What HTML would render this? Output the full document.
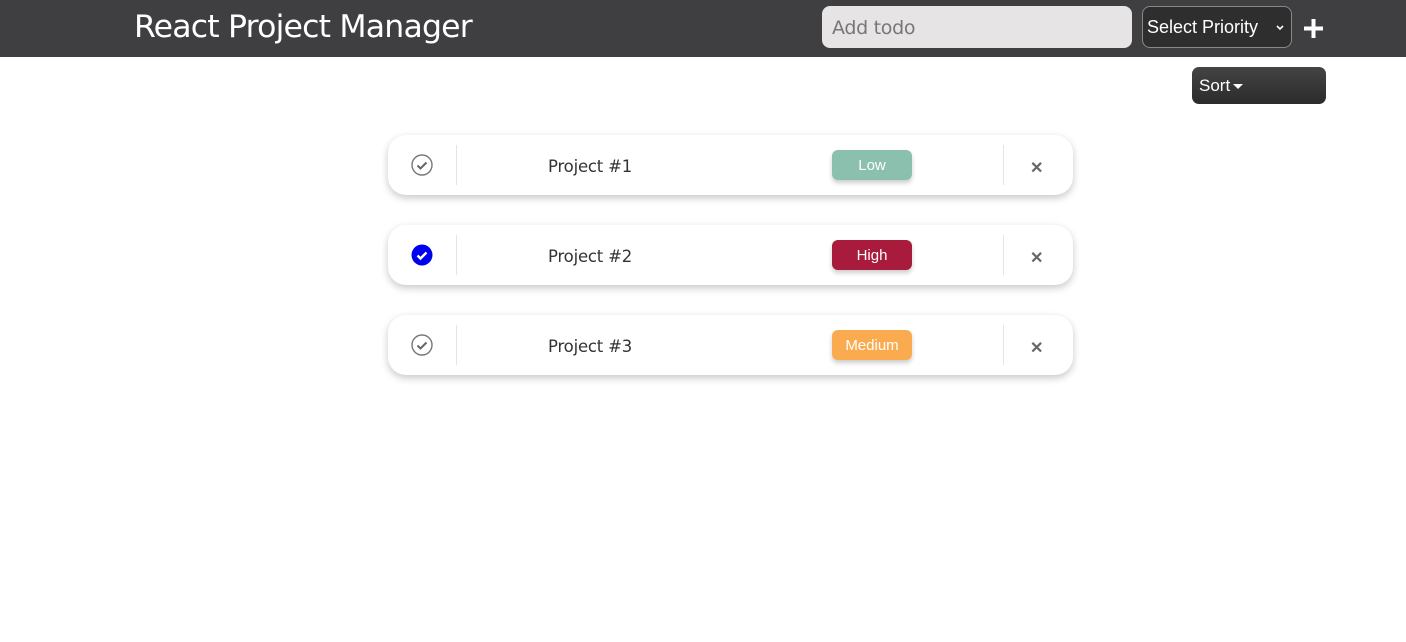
<!DOCTYPE html>
<html><head><style>
body{margin:0;width:1406px;height:642px;background:#fff;font-family:"Liberation Sans",sans-serif;position:relative;overflow:hidden}
.hdr{position:absolute;left:0;top:0;width:1406px;height:57px;background:#3f3f41}
.title{position:absolute;left:134px;top:9px;color:#fff;font-size:31.5px;font-family:"DejaVu Sans","Liberation Sans",sans-serif;letter-spacing:-0.8px}
.inp{position:absolute;left:822px;top:6px;width:310px;height:42px;background:#e6e4e5;border-radius:8px;color:#777;font-size:19px;line-height:44px;box-sizing:border-box;padding-left:10px;font-family:"DejaVu Sans",sans-serif;letter-spacing:-0.3px}
.sel{position:absolute;left:1142px;top:6px;width:150px;height:42px;border:1px solid #888;border-radius:8px;box-sizing:border-box;background:#2e2e2e;color:#fff;font-size:18px;line-height:40px;padding-left:4px}
.sel svg{position:absolute;right:6px;top:17px}
.plus{position:absolute;left:1302px;top:17px;width:23px;height:23px}
.sort{position:absolute;left:1192px;top:67px;width:134px;height:37px;background:linear-gradient(#444,#2b2b2b);border-radius:7px;color:#fff;font-size:17px;line-height:37px;padding-left:7px;box-sizing:border-box}
.sort svg{vertical-align:middle;margin-left:3px}
.card{position:absolute;left:388px;width:685px;height:60px;background:#fff;border-radius:18px;box-shadow:0 3px 8px rgba(0,0,0,.22)}
.div1,.div2{position:absolute;top:10px;width:1px;height:40px;background:#e4e4e4}
.div1{left:68px}.div2{left:615px}
.name{position:absolute;left:160px;top:2px;line-height:60px;font-size:16.5px;color:#333;font-family:"DejaVu Sans",sans-serif;letter-spacing:-0.2px}
.badge{position:absolute;left:444px;top:15px;width:80px;height:30px;border-radius:6px;color:#fff;font-size:15px;text-align:center;line-height:32px;box-shadow:0 3px 5px rgba(0,0,0,.2)}
.x{position:absolute;left:642px;top:23px;font-size:16px;color:#666;font-weight:bold}
.chk{position:absolute;left:23px;top:19px}
</style></head><body>
<div class="hdr">
<div class="title">React Project Manager</div>
<div class="inp">Add todo</div>
<div class="sel">Select Priority<svg width="10" height="8" viewBox="0 0 10 8"><path d="M2 2l3 3 3-3" fill="none" stroke="#fff" stroke-width="1.6"/></svg></div>
<svg class="plus" viewBox="0 0 23 23"><path d="M11.5 2V21M2 11.5H21" stroke="#fff" stroke-width="4"/></svg>
</div>
<div class="sort">Sort<svg width="10" height="6" viewBox="0 0 10 6"><path d="M0 0H10L5 5Z" fill="#fff"/></svg></div>

<div class="card" style="top:135px"><svg class="chk" width="22" height="22" viewBox="0 0 22 22"><circle cx="11" cy="11" r="10" fill="none" stroke="#777" stroke-width="1.4"/><path d="M6.5 11.5l3 3 6-6" fill="none" stroke="#666" stroke-width="2"/></svg><div class="div1"></div><div class="name">Project #1</div><div class="badge" style="background:#8cc0ae">Low</div><div class="div2"></div><div class="x">✕</div></div>

<div class="card" style="top:225px"><svg class="chk" width="22" height="22" viewBox="0 0 22 22"><circle cx="11" cy="11" r="10.5" fill="#0000f0"/><path d="M6.5 11.5l3 3 6-6" fill="none" stroke="#fff" stroke-width="2.4"/></svg><div class="div1"></div><div class="name">Project #2</div><div class="badge" style="background:#a91b3c">High</div><div class="div2"></div><div class="x">✕</div></div>

<div class="card" style="top:315px"><svg class="chk" width="22" height="22" viewBox="0 0 22 22"><circle cx="11" cy="11" r="10" fill="none" stroke="#777" stroke-width="1.4"/><path d="M6.5 11.5l3 3 6-6" fill="none" stroke="#666" stroke-width="2"/></svg><div class="div1"></div><div class="name">Project #3</div><div class="badge" style="background:#fbab4f">Medium</div><div class="div2"></div><div class="x">✕</div></div>
</body></html>
